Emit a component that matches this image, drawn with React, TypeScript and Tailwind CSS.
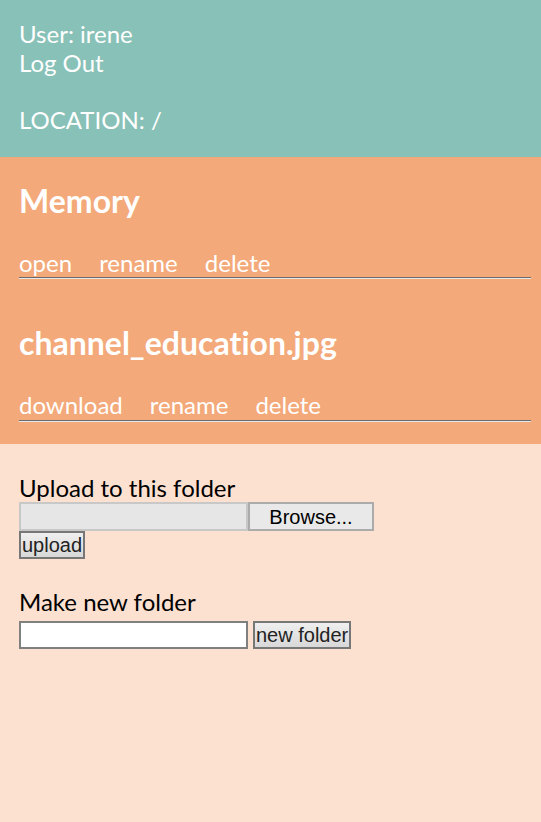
import React from "react";

const Hr = () => (
  <div className="mr-[10px] border-t border-t-[#6b6b6b] border-b border-b-[#e8e8e8]" />
);

function Item({ title, actions }: { title: string; actions: string[] }) {
  return (
    <div>
      <h2 className="text-[32px] font-bold leading-[38.4px] mb-[28px]">{title}</h2>
      <div className="flex gap-[27px] leading-[28.8px]">
        {actions.map((a) => (
          <span key={a}>{a}</span>
        ))}
      </div>
      <Hr />
    </div>
  );
}

export default function App() {
  return (
    <div
      className="min-h-[822px] flex flex-col text-[24px] leading-[28.8px] [font-variant-ligatures:none]"
      style={{ fontFamily: "Lato, 'Noto Sans', sans-serif" }}
    >
      <div className="bg-[#88c1b7] text-white pl-[19px] pt-[20px] pb-[22px]">
        <div>User: irene</div>
        <div>Log Out</div>
        <div className="h-[28.8px]" />
        <div>LOCATION: /</div>
      </div>
      <div className="bg-[#f3a979] text-white pl-[19px] pt-[25px] pb-[22px] flex flex-col gap-[45px]">
        <Item title="Memory" actions={["open", "rename", "delete"]} />
        <Item title="channel_education.jpg" actions={["download", "rename", "delete"]} />
      </div>
      <div className="bg-[#fce0d0] flex-1 pl-[19px] pt-[30px] text-black">
        <div>Upload to this folder</div>
        <div className="flex h-[29px]">
          <div className="w-[229px] h-[29px] bg-[#e6e6e6] border-2 border-[#c8c8c8]" />
          <div
            className="w-[126px] h-[29px] bg-[#e9e9e9] border-2 border-[#ababab] flex items-center justify-center text-[20px] text-black"
            style={{ fontFamily: "'Liberation Sans', Arial, sans-serif" }}
          >
            Browse...
          </div>
        </div>
        <div className="flex">
          <button
            className="h-[28px] px-[1px] border-2 border-[#777777] bg-gradient-to-b from-[#efefef] to-[#d8d8d8] text-[20px] leading-[24px] text-[#222]"
            style={{ fontFamily: "'Liberation Sans', Arial, sans-serif" }}
          >
            upload
          </button>
        </div>
        <div className="h-[28.8px]" />
        <div>Make new folder</div>
        <div className="flex items-center gap-[5px] mt-[4px]">
          <input
            type="text"
            className="w-[229px] h-[28px] bg-white border-2 border-[#808080] outline-none"
          />
          <button
            className="h-[28px] px-[1px] border-2 border-[#777777] bg-gradient-to-b from-[#efefef] to-[#d8d8d8] text-[20px] leading-[24px] text-[#222]"
            style={{ fontFamily: "'Liberation Sans', Arial, sans-serif" }}
          >
            new folder
          </button>
        </div>
      </div>
    </div>
  );
}
